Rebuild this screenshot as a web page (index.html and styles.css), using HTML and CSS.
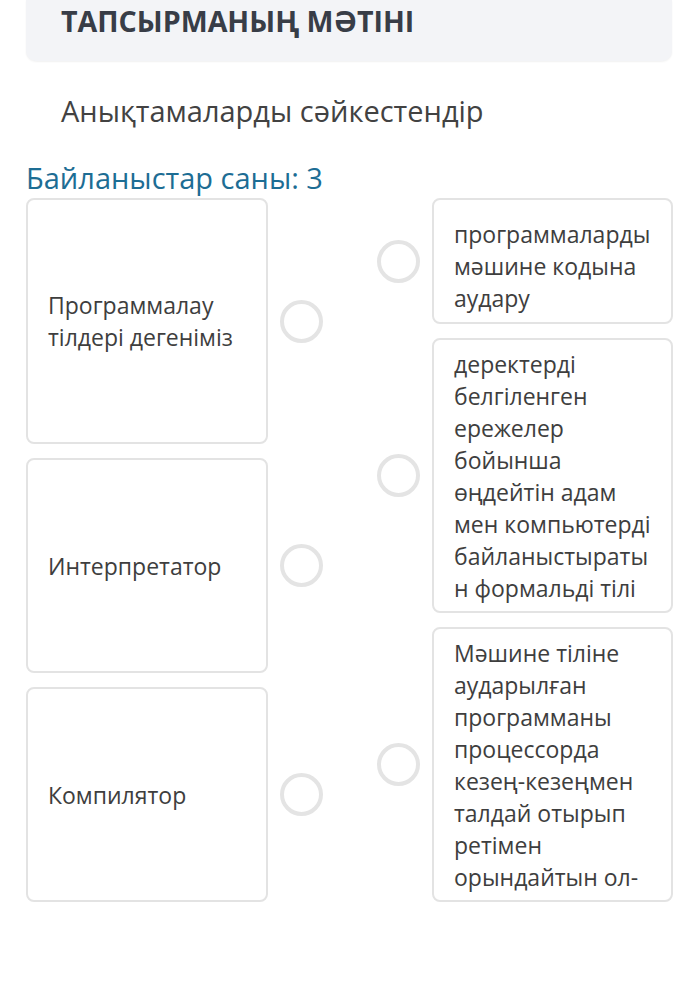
FILE: index.html
```html
<!DOCTYPE html>
<html lang="kk">
<head>
    <meta charset="UTF-8">
    <meta name="viewport" content="width=device-width, initial-scale=1.0">
    <title>Тапсырма</title>
    <link rel="stylesheet" href="styles.css">
</head>
<body>

<div class="task-header">
    <h2>ТАПСЫРМАНЫҢ МӘТІНІ</h2>
</div>

<p class="task-text">Анықтамаларды сәйкестендір</p>

<div class="links-count">Байланыстар саны: 3</div>

<div class="match">
    <div class="match-col">
        <div class="match-item">
            <div class="card card-left card-tall">Программалау тілдері дегеніміз</div>
            <span class="dot"></span>
        </div>
        <div class="match-item">
            <div class="card card-left">Интерпретатор</div>
            <span class="dot"></span>
        </div>
        <div class="match-item">
            <div class="card card-left">Компилятор</div>
            <span class="dot"></span>
        </div>
    </div>

    <div class="match-col">
        <div class="match-item">
            <span class="dot"></span>
            <div class="card card-right card-short">программаларды мәшине кодына аудару</div>
        </div>
        <div class="match-item">
            <span class="dot"></span>
            <div class="card card-right">деректерді белгіленген ережелер бойынша өңдейтін адам мен компьютерді байланыстыратын формальді тілі</div>
        </div>
        <div class="match-item">
            <span class="dot"></span>
            <div class="card card-right">Мәшине тіліне аударылған программаны процессорда кезең-кезеңмен талдай отырып ретімен орындайтын ол-</div>
        </div>
    </div>
</div>

</body>
</html>
```

FILE: styles.css
```css
body {
    font-family: "Open Sans", "Noto Sans", sans-serif;
    background-color: #ffffff;
    color: #3e3e3e;
    margin: 0;
    width: 673px;
}
.task-header {
    background-color: #f3f4f7;
    margin: 0 1px 0 26px;
    padding: 2px 35px 21px;
    border-radius: 0 0 10px 10px;
    box-shadow: 0 1px 2px rgba(0, 0, 0, 0.06);
}
.task-header h2 {
    margin: 0;
    font-size: 28.6px;
    line-height: 38px;
    font-weight: 700;
    color: #383d47;
}
.task-text {
    margin: 31px 0 0 61px;
    font-size: 29px;
    line-height: 38px;
    color: #424242;
}
.links-count {
    margin: 29px 0 0 26px;
    font-size: 29px;
    line-height: 38px;
    color: #1d6d94;
}
.match {
    display: flex;
    justify-content: space-between;
    margin: 1px 0 0 26px;
}
.match-col {
    display: flex;
    flex-direction: column;
    gap: 14px;
}
.match-item {
    display: flex;
    align-items: center;
    gap: 12px;
}
.card {
    box-sizing: border-box;
    border: 2px solid #e3e3e3;
    border-radius: 8px;
    font-size: 23px;
    line-height: 32px;
    color: #3e3e3e;
    overflow: hidden;
}
.card-left {
    width: 242px;
    height: 215px;
    padding: 0 20px;
    display: flex;
    align-items: center;
}
.card-tall {
    height: 246px;
}
.card-right {
    width: 241px;
    height: 275px;
    padding: 8px 20px 7px;
    overflow-wrap: anywhere;
}
.card-short {
    height: 126px;
    padding-top: 18px;
}
.dot {
    box-sizing: border-box;
    width: 43px;
    height: 43px;
    border: 4px solid #e4e4e4;
    border-radius: 50%;
    flex-shrink: 0;
}
```
